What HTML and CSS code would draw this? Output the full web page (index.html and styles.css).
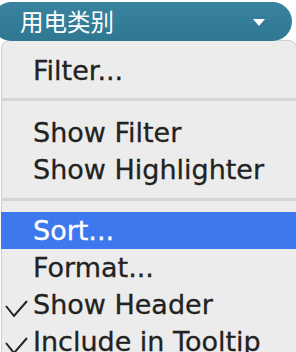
FILE: index.html
```html
<!DOCTYPE html>
<html>
<head>
<meta charset="utf-8">
<link rel="stylesheet" href="styles.css">
</head>
<body>
<div class="pill">
  <span class="pill-label">用电类别</span>
  <svg class="pill-arrow" width="12" height="8" viewBox="0 0 12 8"><polygon points="0,0 12,0 6,7" fill="#fff"/></svg>
</div>
<div class="menu">
  <div class="item">Filter...</div>
  <div class="sep sep-a"></div>
  <div class="item">Show Filter</div>
  <div class="item">Show Highlighter</div>
  <div class="sep sep-b"></div>
  <div class="item active">Sort...</div>
  <div class="item">Format...</div>
  <div class="item"><svg class="check" width="24" height="19" viewBox="0 0 24 19"><polyline points="1,7 9,17 22,2" fill="none" stroke="#222" stroke-width="2"/></svg>Show Header</div>
  <div class="item"><svg class="check" width="24" height="19" viewBox="0 0 24 19"><polyline points="1,7 9,17 22,2" fill="none" stroke="#222" stroke-width="2"/></svg>Include in Tooltip</div>
</div>
</body>
</html>
```
FILE: styles.css
```css
html, body {
  margin: 0;
  padding: 0;
  background: #ffffff;
  overflow: hidden;
  width: 296px;
  height: 352px;
}
.pill {
  position: relative;
  z-index: 2;
  margin: 2px 0 0 -8px;
  width: 300px;
  height: 39px;
  border-radius: 20px;
  background: linear-gradient(#3a83a0, #2f7891);
  display: flex;
  align-items: center;
  box-sizing: border-box;
  padding-left: 28px;
}
.pill-label {
  font-family: "Noto Sans CJK SC", "Noto Sans", sans-serif;
  font-size: 23.5px;
  color: #ffffff;
  line-height: 1;
}
.pill-arrow {
  position: absolute;
  left: 261px;
  top: 17px;
}
.menu {
  margin: -1px 0 0 1px;
  width: 296px;
  box-sizing: border-box;
  background: #ececec;
  border: 1px solid #cfcfcf;
  border-radius: 8px;
  padding: 11px 0 0 0;
  height: 400px;
  font-family: "DejaVu Sans", "Liberation Sans", sans-serif;
  font-size: 27px;
  color: #222222;
  -webkit-text-stroke: 0.3px currentColor;
}
.item {
  position: relative;
  height: 37px;
  line-height: 37px;
  padding-left: 31px;
  white-space: nowrap;
}
.item.active {
  background: #3e78ee;
  color: #ffffff;
  margin: 0 -1px;
  padding-left: 32px;
}
.sep {
  height: 3px;
  background: #d5d5d5;
}
.sep-a {
  margin: 9px 0 13px 0;
}
.sep-b {
  margin: 10px 0 11px 0;
}
.check {
  position: absolute;
  left: 3px;
  top: 13px;
}
```
